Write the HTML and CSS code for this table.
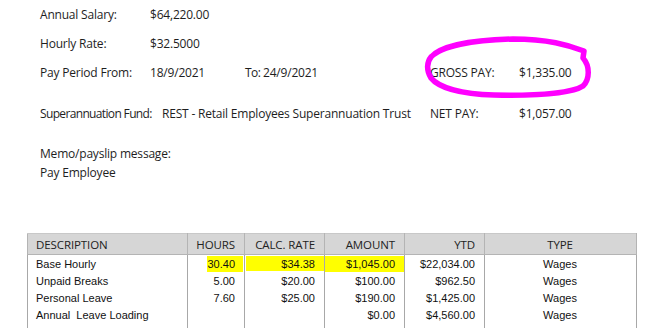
FILE: index.html
```html
<!DOCTYPE html>
<html>
<head>
<meta charset="utf-8">
<link rel="stylesheet" href="styles.css">
</head>
<body>
<div class="page">
  <div class="info">
    <div class="row r1"><span class="lbl">Annual Salary:</span><span>$64,220.00</span></div>
    <div class="row r2"><span class="lbl">Hourly Rate:</span><span>$32.5000</span></div>
    <div class="row r3">
      <span class="lbl">Pay Period From:</span><span class="from">18/9/2021</span><span class="to">To:</span><span class="todate">24/9/2021</span>
      <span class="plbl">GROSS PAY:</span><span>$1,335.00</span>
    </div>
    <div class="row r4">
      <span class="lbl2">Superannuation Fund:</span><span class="fund">REST - Retail Employees Superannuation Trust</span>
      <span class="plbl">NET PAY:</span><span>$1,057.00</span>
    </div>
    <div class="memo">
      <div>Memo/payslip message:</div>
      <div>Pay Employee</div>
    </div>
  </div>

  <table class="lines">
    <colgroup>
      <col class="c-desc"><col class="c-hours"><col class="c-rate"><col class="c-amt"><col class="c-ytd"><col class="c-type">
    </colgroup>
    <thead>
      <tr><th class="l">DESCRIPTION</th><th>HOURS</th><th>CALC. RATE</th><th>AMOUNT</th><th>YTD</th><th class="c">TYPE</th></tr>
    </thead>
    <tbody>
      <tr><td class="l">Base Hourly</td><td class="hl-h">30.40</td><td class="hl-r">$34.38</td><td class="hl-a">$1,045.00</td><td>$22,034.00</td><td class="c">Wages</td></tr>
      <tr><td class="l">Unpaid Breaks</td><td>5.00</td><td>$20.00</td><td>$100.00</td><td>$962.50</td><td class="c">Wages</td></tr>
      <tr><td class="l">Personal Leave</td><td>7.60</td><td>$25.00</td><td>$190.00</td><td>$1,425.00</td><td class="c">Wages</td></tr>
      <tr><td class="l">Annual&nbsp; Leave Loading</td><td></td><td></td><td>$0.00</td><td>$4,560.00</td><td class="c">Wages</td></tr>
      <tr><td class="l">Superannuation payment</td><td></td><td></td><td>$0.00</td><td>$300.00</td><td class="c">Deduction</td></tr>
    </tbody>
  </table>

  <svg class="circle" width="669" height="328" viewBox="0 0 669 328">
    <path d="M431,57 C441,46 472,40 513,39 C548,39 568,45 584,51 L583,58 C590,66 590,79 583,86 C574,92 545,96 494,95 C462,94 439,88 431,78 C426,70 427,62 431,57" fill="none" stroke="#ff00ff" stroke-width="5.5" stroke-linecap="round" stroke-linejoin="round"/>
  </svg>
</div>
</body>
</html>
```

FILE: styles.css
```css
html, body {
  margin: 0;
  padding: 0;
  background: #ffffff;
}

.page {
  position: relative;
  width: 669px;
  height: 328px;
  overflow: hidden;
  font-family: "Open Sans", "Noto Sans", sans-serif;
  font-size: 12px;
  letter-spacing: -0.2px;
  color: #1e1e1e;
}

.info {
  padding-left: 40px;
  padding-top: 4px;
}

.row {
  display: flex;
  align-items: center;
  height: 20px;
  white-space: nowrap;
}

.row > span { flex: none; }

.r2, .r3 { margin-top: 9px; }
.r4 { margin-top: 21px; }

.lbl { width: 110px; }
.from { width: 95px; }
.to { width: 18px; letter-spacing: -0.6px; }
.todate { width: 167px; }
.plbl { width: 89px; }
.lbl2 { width: 122px; letter-spacing: -0.65px; }
.fund { width: 268px; }

.memo {
  margin-top: 21px;
  line-height: 19px;
}

.lines {
  margin-top: 51px;
  margin-left: 27px;
  width: 609px;
  table-layout: fixed;
  border-collapse: collapse;
  font-family: "Liberation Sans", Arial, sans-serif;
  font-size: 11px;
  letter-spacing: 0;
  color: #111;
  border: 1px solid #b4b4b4;
}

.c-desc { width: 160px; }
.c-hours { width: 57px; }
.c-rate { width: 80px; }
.c-amt { width: 80px; }
.c-ytd { width: 80px; }
.c-type { width: 152px; }

.lines th {
  height: 20px;
  background: #d6d6d6;
  font-family: "Open Sans", "Noto Sans", sans-serif;
  font-weight: normal;
  font-size: 11.5px;
  letter-spacing: -0.1px;
  color: #222;
  text-align: right;
  white-space: nowrap;
  padding: 0 9px 0 8px;
  border: 1px solid #b4b4b4;
  border-top-color: #c8c8c8;
}

.lines td {
  height: 17px;
  padding: 0 9px 0 8px;
  text-align: right;
  border-left: 1px solid #a8a8a8;
  border-right: 1px solid #a8a8a8;
  white-space: nowrap;
}

.lines .l { text-align: left; }
.lines .c { text-align: center; }

.hl-h { background: linear-gradient(#ffff00, #ffff00) no-repeat right 1px top 1px / 36px 16px; }
.hl-r { background: linear-gradient(#ffff00, #ffff00) no-repeat right 0 top 1px / 78px 15px; }
.hl-a { background: linear-gradient(#ffff00, #ffff00) no-repeat left 0 top 1px / 79px 16px; }

.circle {
  position: absolute;
  left: 0;
  top: 0;
  pointer-events: none;
}
```
